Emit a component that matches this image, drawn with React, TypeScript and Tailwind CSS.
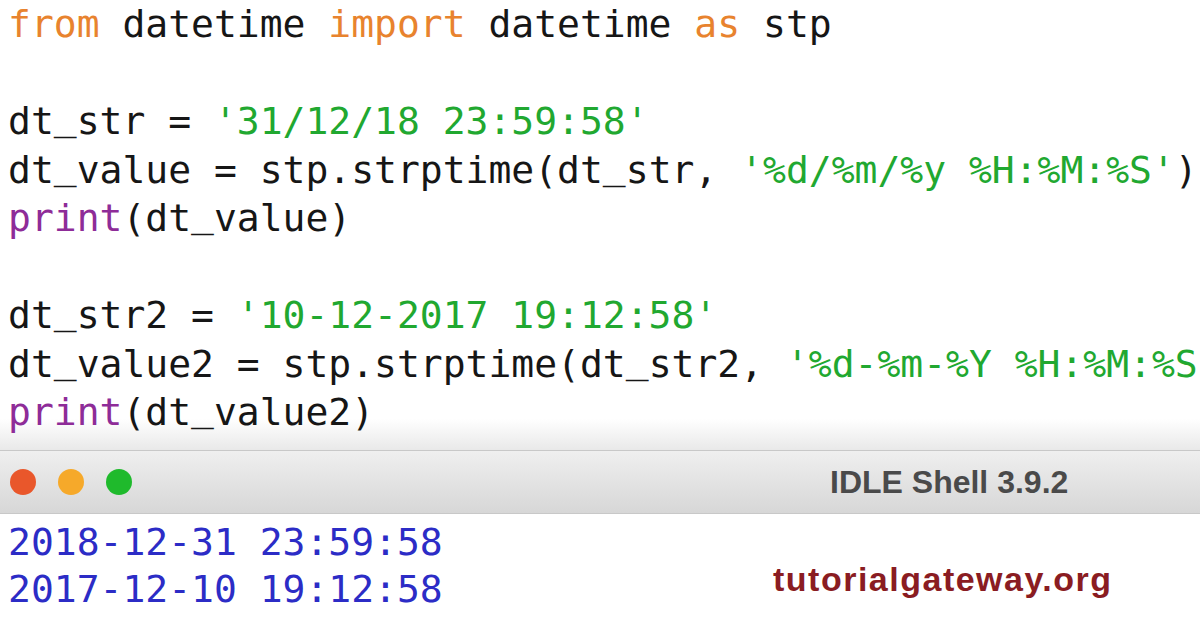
import React from "react";

const mono = { fontFamily: '"DejaVu Sans Mono", "Liberation Mono", monospace' };

const T = ({ t }: { t: string }) => (
  <>
    {t.split("_").map((part, i) => (
      <React.Fragment key={i}>
        {i > 0 && <span className="relative -top-[5px]">_</span>}
        {part}
      </React.Fragment>
    ))}
  </>
);

const K = ({ children }: { children: React.ReactNode }) => (
  <span className="text-[#e8832e]">{children}</span>
);
const S = ({ children }: { children: React.ReactNode }) => (
  <span className="text-[#21a830]">{children}</span>
);
const P = ({ children }: { children: React.ReactNode }) => (
  <span className="text-[#8e2c98]">{children}</span>
);

const App = () => {
  return (
    <div className="w-[1200px] h-[628px] overflow-hidden bg-white flex flex-col">
      {/* editor */}
      <div
        className="h-[450px] shrink-0 pl-[8px] text-[38px] leading-[48.5px] text-[#161616] whitespace-pre bg-gradient-to-b from-white from-[93%] to-[#e9e9e9]"
        style={mono}
      >
        <div>
          <K>from</K> datetime <K>import</K> datetime <K>as</K> stp
        </div>
        <div>&nbsp;</div>
        <div>
          <T t="dt_str = " />
          <S>'31/12/18 23:59:58'</S>
        </div>
        <div>
          <T t="dt_value = stp.strptime(dt_str, " />
          <S>'%d/%m/%y %H:%M:%S'</S>)
        </div>
        <div>
          <P>print</P>
          <T t="(dt_value)" />
        </div>
        <div>&nbsp;</div>
        <div>
          <T t="dt_str2 = " />
          <S>'10-12-2017 19:12:58'</S>
        </div>
        <div>
          <T t="dt_value2 = stp.strptime(dt_str2, " />
          <S>'%d-%m-%Y %H:%M:%S'</S>)
        </div>
        <div>
          <P>print</P>
          <T t="(dt_value2)" />
        </div>
      </div>

      {/* shell title bar */}
      <div className="h-[64px] shrink-0 flex items-center border-t border-b border-[#c8c8c8] bg-gradient-to-b from-[#efefef] to-[#d7d7d7]">
        <div className="flex items-center gap-[22px] pl-[10px]">
          <div className="w-[26px] h-[26px] rounded-full bg-[#e9572b]" />
          <div className="w-[26px] h-[26px] rounded-full bg-[#f6a92a]" />
          <div className="w-[26px] h-[26px] rounded-full bg-[#1fba2c]" />
        </div>
        <div
          className="ml-[698px] text-[32px] font-bold text-[#4a4a4a]"
          style={{ fontFamily: '"Liberation Sans", Arial, sans-serif' }}
        >
          IDLE Shell 3.9.2
        </div>
      </div>

      {/* shell output */}
      <div className="relative flex-1 pt-[5px] pl-[8px]">
        <div className="text-[38px] leading-[47px] text-[#2c2cc6] whitespace-pre" style={mono}>
          <div>2018-12-31 23:59:58</div>
          <div>2017-12-10 19:12:58</div>
        </div>
        <div
          className="absolute left-[773px] top-[40px] text-[34px] font-bold text-[#8a1c22] tracking-[1.5px]"
          style={{ fontFamily: '"Liberation Sans", Arial, sans-serif' }}
        >
          tutorialgateway.org
        </div>
      </div>
    </div>
  );
};

export default App;
